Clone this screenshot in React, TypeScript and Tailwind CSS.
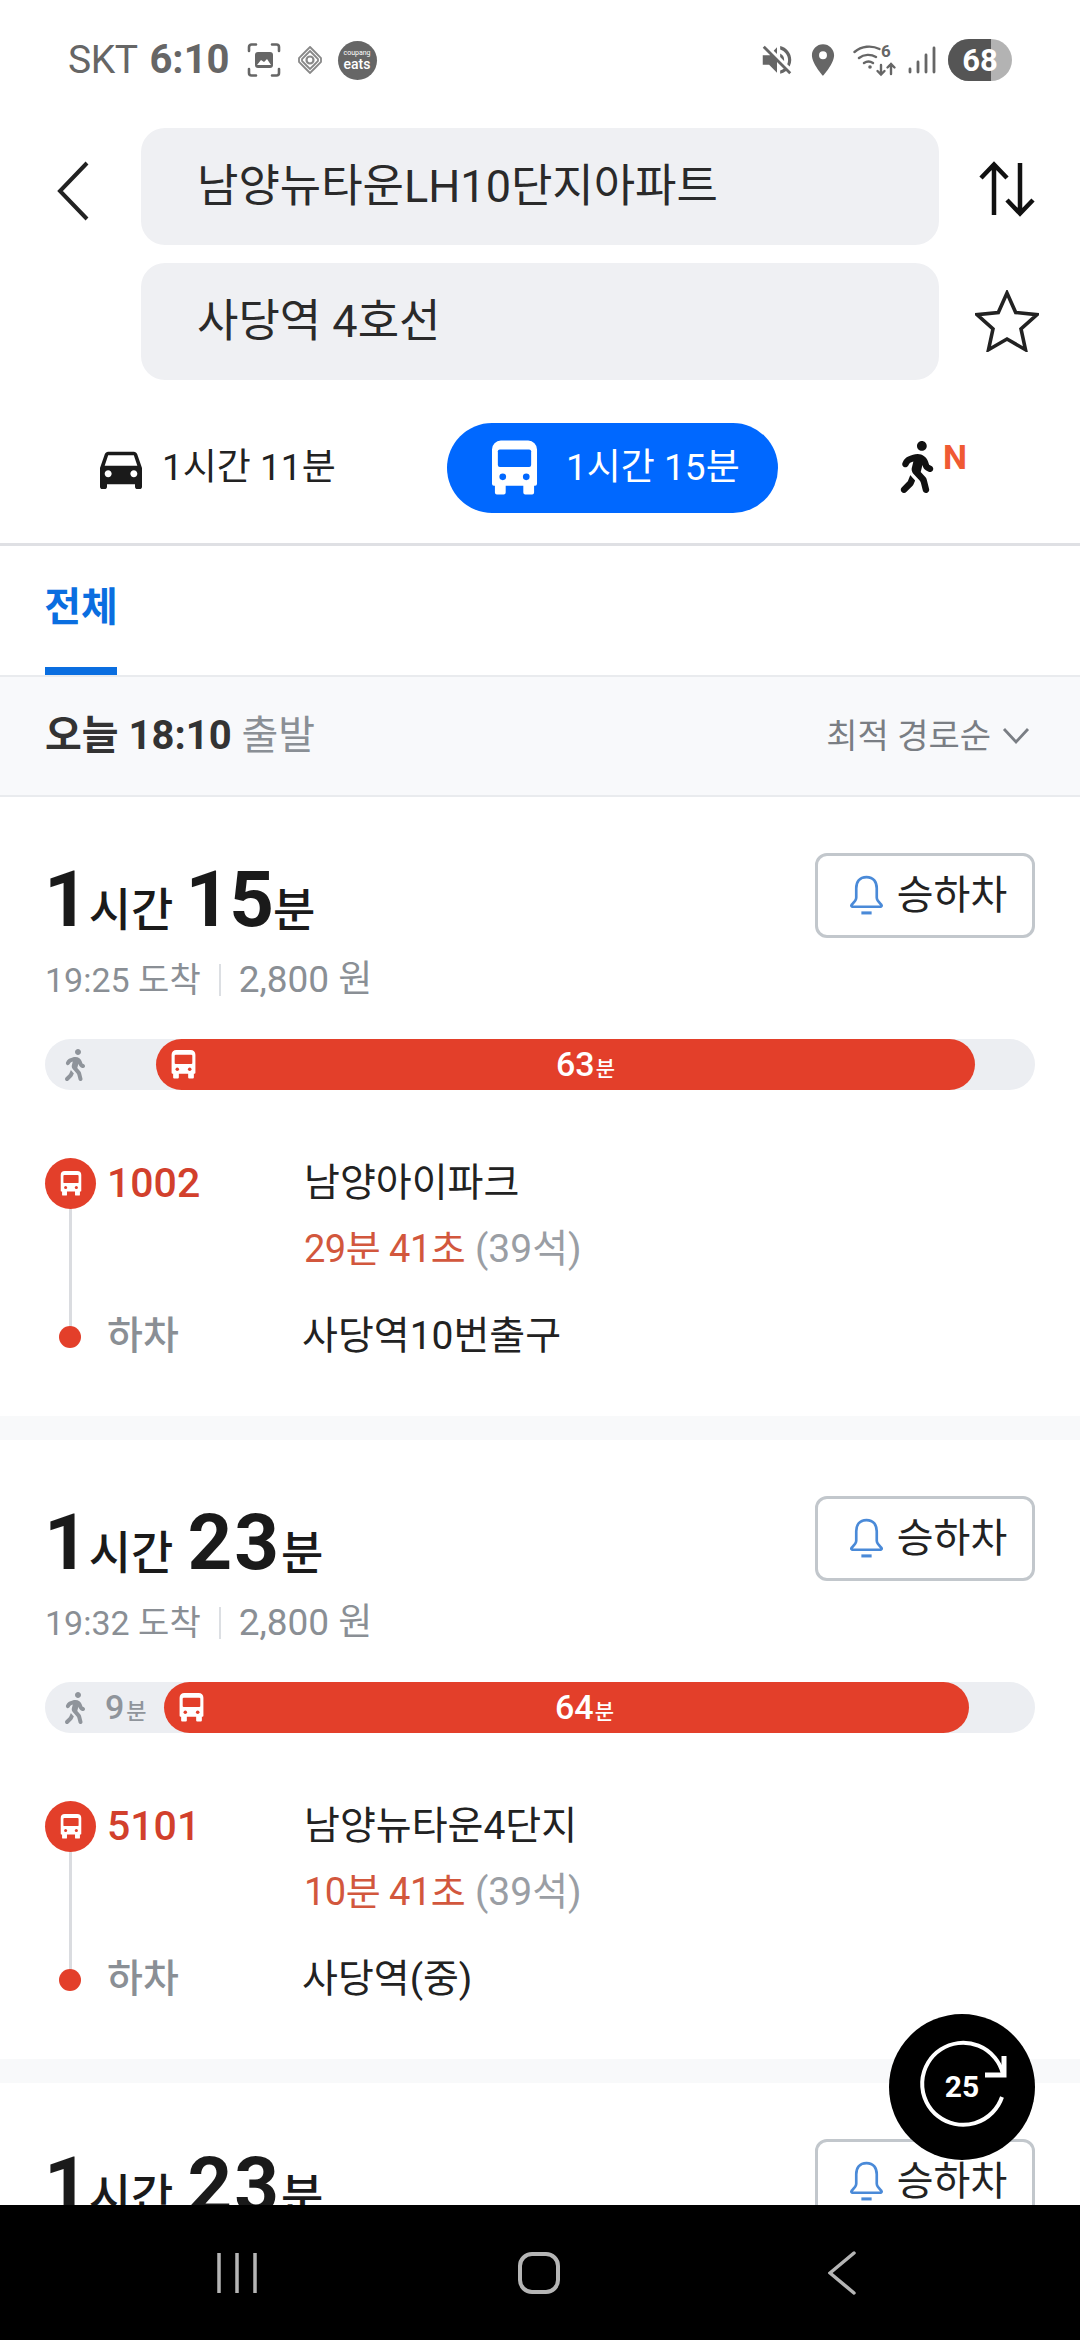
import React from "react";
import { MdDirectionsCar, MdLocationOn, MdVolumeOff } from "react-icons/md";
import { FaWalking } from "react-icons/fa";

const Bus = ({ className, fill = "#fff", hole = "#e33f2a" }: { className?: string; fill?: string; hole?: string }) => (
  <svg viewBox="0 0 24 28" className={className}>
    <path d="M5 0h14a4.5 4.5 0 0 1 4.5 4.5V22a1 1 0 0 1-1 1H22v3.5a1 1 0 0 1-1 1h-3.5a1 1 0 0 1-1-1V23h-9v3.5a1 1 0 0 1-1 1H3a1 1 0 0 1-1-1V23h-.5a1 1 0 0 1-1-1V4.500A4.500 4.500 0 0 1 5 0z" fill={fill} />
    <rect x="3.500" y="4.500" width="17" height="9" rx="1" fill={hole} />
    <circle cx="6" cy="18.500" r="1.700" fill={hole} />
    <circle cx="18" cy="18.500" r="1.700" fill={hole} />
  </svg>
);

const Bell = () => (
  <svg viewBox="0 0 34 40" className="w-[35px] h-[41px] shrink-0" fill="none" stroke="#4a8ad8" strokeWidth="2.600" strokeLinejoin="round">
    <path d="M17 2c-7 0-10 5-10 11v9c0 3-2.500 5-4.500 7-.8 1 0 2 1 2h27c1 0 1.800-1 1-2-2-2-4.500-4-4.500-7v-9c0-6-3-11-10-11z" />
    <path d="M12 37h10" strokeWidth="3" />
  </svg>
);

type R = { m: string; mc: string; arr: string; walk: string; bar: string; dur: string; bus: string; from: string; wait: string; off: string };

const Route = ({ r }: { r: R }) => (
  <section className="bg-white h-[619px] px-[45px] pt-[57px] shrink-0 overflow-hidden">
    <div className="flex justify-between items-start h-[84px]">
      <div className="flex items-baseline text-[#1a1a1a] font-bold mt-[11px] leading-[70px] -ml-[1px]">
        <span className="text-[78px] tracking-[-1px]">1</span>
        <span className="text-[46px] font-medium ml-[1px] mr-[12px]">시간</span>
        <span className={r.mc}>{r.m}</span>
        <span className="text-[46px] font-medium">분</span>
      </div>
      <button className="w-[220px] h-[85px] -mt-[1px] border-[3px] border-[#c2c7cc] rounded-[12px] flex items-center justify-center gap-[13px] pl-[6px] text-[40px] text-[#222] bg-white">
        <Bell />
        <span className="leading-none">승하차</span>
      </button>
    </div>
    <div className="flex items-center h-[36px] mt-[24px] text-[34px] text-[#8a8f95]">
      <span>{r.arr} 도착</span>
      <span className="w-[2px] h-[32px] bg-[#dcdfe3] mx-[18px]" />
      <span className="text-[37px]">2,800 원</span>
    </div>
    <div className="relative mt-[41px] h-[51px] rounded-full bg-[#eceef2] flex items-center pl-[18px] text-[#8f949b]">
      <FaWalking className="w-[24px] h-[32px] text-[#8f949b]" />
      {r.walk && (
        <span className="flex items-baseline text-[34px] font-medium ml-[18px]">
          {r.walk}
          <span className="text-[22px] ml-[2px]">분</span>
        </span>
      )}
      <div className={r.bar}>
        <Bus className="absolute left-[15px] top-[11px] w-[25px] h-[29px]" />
        <span className="flex items-baseline text-white text-[34px] font-medium">
          {r.dur}
          <span className="text-[21px] ml-[1px]">분</span>
        </span>
      </div>
    </div>
    <div className="relative mt-[68px] grid grid-cols-[260px_1fr] text-[39px]">
      <div className="absolute left-[24px] top-[40px] w-[3px] h-[140px] bg-[#dadce0]" />
      <div className="flex items-center h-[51px]">
        <span className="w-[51px] h-[51px] rounded-full bg-[#e33f2a] flex items-center justify-center relative">
          <Bus className="w-[22px] h-[25px]" />
        </span>
        <span className="ml-[11px] text-[41px] font-medium text-[#d2402c]">{r.bus}</span>
      </div>
      <div className="h-[51px] leading-[51px] text-[#222] -ml-[1px]">{r.from}</div>
      <div />
      <div className="h-[51px] leading-[51px] mt-[15px] -ml-[1px] text-[38px]">
        <span className="text-[#d2573d] tracking-[-0.5px]">{r.wait}</span>
        <span className="text-[#9a9ea4] text-[39px]"> (39석)</span>
      </div>
      <div className="flex items-center h-[51px] mt-[36px] relative">
        <span className="w-[22px] h-[22px] rounded-full bg-[#e33f2a] ml-[14px]" />
        <span className="ml-[26px] font-medium text-[#8a8f95]">하차</span>
      </div>
      <div className="h-[51px] leading-[51px] mt-[36px] text-[#222] -ml-[3px]">{r.off}</div>
    </div>
  </section>
);

const barA = "absolute left-[111px] w-[819px] top-0 h-[51px] rounded-full bg-[#e33f2a] flex items-center justify-center pl-[40px]";
const barB = "absolute left-[119px] w-[805px] top-0 h-[51px] rounded-full bg-[#e33f2a] flex items-center justify-center pl-[36px]";
const m15 = "text-[78px] tracking-[-1px]";
const m23 = "text-[78px] tracking-[2px] ml-[2px]";

export default function App() {
  return (
    <div className="w-[1080px] h-[2340px] relative overflow-hidden bg-white flex flex-col font-['Roboto','Noto_Sans_CJK_KR',sans-serif]">
      {/* status bar */}
      <div className="h-[120px] shrink-0 flex items-center justify-between pl-[68px] pr-[68px] text-[#666]">
        <div className="flex items-center">
          <span className="text-[39px] tracking-[-0.5px]">SKT</span>
          <span className="text-[40px] font-bold ml-[12px]">6:10</span>
          <svg viewBox="0 0 34 34" className="w-[34px] h-[34px] ml-[17px]" fill="none" stroke="#666" strokeWidth="2.600" strokeLinecap="round">
            <path d="M2 8V4a2.500 2.500 0 0 1 2.500-2.500H9M25 1.500h4.500A2.500 2.500 0 0 1 32 4v4M2 26v4a2.500 2.500 0 0 0 2.500 2.500H9M25 32.500h4.500A2.500 2.500 0 0 0 32 30v-4" />
            <rect x="8" y="9" width="18" height="16" rx="3" fill="#666" stroke="none" />
            <path d="M10 22l4-5 3 2 3-3 4 6z" fill="#fff" stroke="none" />
          </svg>
          <svg viewBox="0 0 26 28" className="w-[26px] h-[28px] ml-[16px]" fill="none" stroke="#888" strokeWidth="1.800">
            <path d="M13 1l5 5 6 6v4l-6 6-5 5-5-5-6-6v-4l6-6z" />
            <path d="M13 5l4 4 4 4v2l-4 4-4 4-4-4-4-4v-2l4-4z" />
            <circle cx="13" cy="14" r="3.500" strokeWidth="2.200" />
          </svg>
          <span className="w-[39px] h-[39px] ml-[15px] rounded-full bg-[#666] text-white flex flex-col items-center justify-center leading-none">
            <span className="text-[7px]">coupang</span>
            <span className="text-[14px] font-medium">eats</span>
          </span>
        </div>
        <div className="flex items-center">
          <MdVolumeOff className="w-[38px] h-[38px] text-[#666]" />
          <MdLocationOn className="w-[38px] h-[40px] ml-[8px] text-[#666]" />
          <svg viewBox="0 0 46 34" className="w-[46px] h-[34px] ml-[11px]" fill="none" stroke="#666" strokeWidth="2.400" strokeLinecap="round">
            <path d="M1.500 9c7-6 17-7 25-3M6 15c5-4 12-4 17-1M11 20c3-2 6-2 9 0" />
            <circle cx="17" cy="24" r="1.800" fill="#666" stroke="none" />
            <path d="M28 22v9m-3.500-3l3.500 3.500 3.500-3.500M38 31v-10m-3.500 3.500L38 21l3.500 3.500" />
          </svg>
          <span className="absolute left-[881px] top-[43px] text-[17px] font-bold text-[#666] leading-none">6</span>
          <svg viewBox="0 0 28 28" className="w-[28px] h-[28px] ml-[9px]" fill="none" stroke="#666" strokeWidth="2.800" strokeLinecap="round">
            <path d="M2 26v-3M10 26V16M18 26V9M26 26V2" />
          </svg>
          <div className="w-[64px] h-[42px] ml-[12px] rounded-full overflow-hidden relative bg-[#b3b3b3] text-white flex items-center justify-center">
            <span className="absolute left-0 top-0 bottom-0 w-[43px] bg-[#555]" />
            <span className="relative text-[31px] font-bold leading-none">68</span>
          </div>
        </div>
      </div>

      {/* search */}
      <div className="h-[268px] shrink-0 pt-[8px] flex">
        <div className="w-[141px] flex justify-center pt-[33px] pl-[4px]">
          <svg viewBox="0 0 32 60" className="w-[32px] h-[60px]" fill="none" stroke="#222" strokeWidth="4">
            <path d="M30 2L3 30l27 28" />
          </svg>
        </div>
        <div className="w-[798px] flex flex-col gap-[18px] text-[45px] text-[#2a2a2a]">
          <div className="h-[117px] bg-[#eff0f3] rounded-[24px] flex items-center pl-[56px] pt-[1px]">
            <span>남양뉴타운LH10단지아파트</span>
          </div>
          <div className="h-[117px] bg-[#eff0f3] rounded-[24px] flex items-center pl-[56px]">
            <span>사당역 4호선</span>
          </div>
        </div>
        <div className="flex-1 flex flex-col items-center pr-[6px]">
          <svg viewBox="0 0 58 56" className="w-[58px] h-[56px] mt-[33px]" fill="none" stroke="#111" strokeWidth="4.500">
            <path d="M16 54V4M3 17L16 3.500 29 17M42 2v50M29 39l13 13.500L55 39" />
          </svg>
          <svg viewBox="0 0 64 62" className="w-[64px] h-[62px] mt-[73px]" fill="none" stroke="#222" strokeWidth="3.600" strokeLinejoin="miter">
            <path d="M32 3l8.700 19.500 21.300 2.200-16 14.200 4.500 20.800L32 49 13.500 59.700 18 38.900 2 24.700l21.300-2.200z" />
          </svg>
        </div>
      </div>

      {/* mode tabs */}
      <div className="h-[158px] shrink-0 border-b-[3px] border-[#dfe0e4] flex items-start pt-[35px] relative">
        <div className="flex items-center w-[447px] h-[90px] pl-[97px] gap-[17px] text-[37px] text-[#222]">
          <MdDirectionsCar className="w-[56px] h-[56px] text-[#1a1a1a] -mx-[4px]" />
          <span>1시간 11분</span>
        </div>
        <div className="w-[331px] h-[90px] rounded-full bg-[#0068ff] flex items-center pl-[44px] gap-[28px] text-white text-[37px]">
          <Bus className="w-[47px] h-[56px]" hole="#0068ff" />
          <span>1시간 15분</span>
        </div>
        <div className="ml-[122px] flex items-start h-[90px] pt-[18px]">
          <FaWalking className="w-[34px] h-[52px] text-[#111]" />
          <span className="text-[34px] font-bold text-[#f05a33] leading-none -mt-[1px] ml-[9px]">N</span>
        </div>
      </div>

      {/* tab */}
      <div className="h-[131px] shrink-0 px-[45px] border-b-[2px] border-[#e9ebee] relative">
        <div className="w-[72px] h-[129px] border-b-[8px] border-[#0a6ee0] flex items-start justify-center pt-[38px]">
          <span className="text-[40px] font-bold text-[#0a6ee0] leading-[48px] whitespace-nowrap">전체</span>
        </div>
      </div>

      {/* sort row */}
      <div className="h-[120px] shrink-0 bg-[#f8f9fb] border-b-[2px] border-[#e9ebee] flex items-center justify-between pl-[45px] pr-[50px]">
        <div className="text-[40px] text-[#8a8f95]">
          <span className="font-bold text-[#333]">오늘 18:10</span> 출발
        </div>
        <div className="flex items-center gap-[11px] text-[34px] text-[#7a7e84]">
          <span>최적 경로순</span>
          <svg viewBox="0 0 28 18" className="w-[28px] h-[18px]" fill="none" stroke="#7a7e84" strokeWidth="2.800">
            <path d="M2 2l12 13L26 2" />
          </svg>
        </div>
      </div>

      {/* list */}
      <div className="flex-1 min-h-0 overflow-hidden flex flex-col gap-[24px] bg-[#f8f9fa]">
        <Route r={{ m: "15", mc: m15, arr: "19:25", walk: "", bar: barA, dur: "63", bus: "1002", from: "남양아이파크", wait: "29분 41초", off: "사당역10번출구" }} />
        <Route r={{ m: "23", mc: m23, arr: "19:32", walk: "9", bar: barB, dur: "64", bus: "5101", from: "남양뉴타운4단지", wait: "10분 41초", off: "사당역(중)" }} />
        <Route r={{ m: "23", mc: m23, arr: "19:32", walk: "9", bar: barB, dur: "64", bus: "5101", from: "남양뉴타운4단지", wait: "10분 41초", off: "사당역(중)" }} />
      </div>

      {/* nav */}
      <div className="h-[135px] shrink-0 bg-black flex items-center pl-[216px]">
        <svg viewBox="0 0 42 40" className="w-[42px] h-[40px]" stroke="#b5b5b5" strokeWidth="3.500">
          <path d="M3 0v40M21 0v40M39 0v40" />
        </svg>
        <div className="w-[42px] h-[42px] ml-[260px] rounded-[14px] border-[4px] border-[#b5b5b5]" />
        <svg viewBox="0 0 28 44" className="w-[28px] h-[44px] ml-[268px]" fill="none" stroke="#b5b5b5" strokeWidth="3.500" strokeLinecap="round">
          <path d="M26 2L2 22l24 20" />
        </svg>
      </div>

      {/* floating replay button */}
      <div className="absolute left-[889px] top-[2014px] w-[146px] h-[146px] rounded-full bg-black flex items-center justify-center">
        <svg viewBox="0 0 146 146" className="absolute inset-0 w-full h-full" fill="none" stroke="#fff" strokeWidth="4">
          <path d="M113 83A41 41 0 1 1 114 60" />
          <path d="M115 42v19H96" strokeWidth="5" />
        </svg>
        <span className="relative text-[30px] font-bold text-white leading-none">25</span>
      </div>
    </div>
  );
}
